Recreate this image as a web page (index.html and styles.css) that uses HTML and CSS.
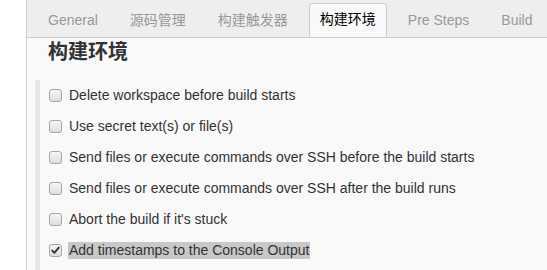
FILE: index.html
```html
<!DOCTYPE html>
<html>
<head>
<meta charset="utf-8">
<link rel="stylesheet" href="styles.css">
</head>
<body>
<div class="page">
  <div class="tabbar">
    <div class="tab">General</div>
    <div class="tab">源码管理</div>
    <div class="tab">构建触发器</div>
    <div class="tab active">构建环境</div>
    <div class="tab">Pre Steps</div>
    <div class="tab">Build</div>
  </div>
  <div class="content">
    <h2 class="title">构建环境</h2>
    <div class="section">
      <label class="row"><span class="cb"></span><span class="lbl">Delete workspace before build starts</span></label>
      <label class="row"><span class="cb"></span><span class="lbl">Use secret text(s) or file(s)</span></label>
      <label class="row"><span class="cb"></span><span class="lbl">Send files or execute commands over SSH before the build starts</span></label>
      <label class="row"><span class="cb"></span><span class="lbl">Send files or execute commands over SSH after the build runs</span></label>
      <label class="row"><span class="cb"></span><span class="lbl">Abort the build if it's stuck</span></label>
      <label class="row"><span class="cb checked"><svg viewBox="0 0 11 11" width="11" height="11"><path d="M2.2 5.6 L4.3 7.8 L8.8 2.6" fill="none" stroke="#333" stroke-width="1.9" stroke-linecap="round" stroke-linejoin="round"/></svg></span><span class="lbl sel">Add timestamps to the Console Output</span></label>
    </div>
  </div>
</div>
</body>
</html>
```
FILE: styles.css
```css
html, body {
  margin: 0;
  padding: 0;
  background: #ffffff;
  height: 100%;
  overflow: hidden;
}
.page {
  margin-left: 26px;
  border-left: 1px solid #d0d0d0;
  background: #f9f9f9;
  height: 100%;
  font-family: "Liberation Sans", Arial, "Noto Sans CJK SC", sans-serif;
}
.tabbar {
  display: flex;
  align-items: flex-end;
  gap: 10px;
  height: 37px;
  padding-left: 10px;
  background: #eeeeee;
  border-bottom: 1px solid #cccccc;
  white-space: nowrap;
  overflow: hidden;
}
.tab {
  font-size: 14px;
  color: #999999;
  padding: 0 10px;
  height: 34px;
  line-height: 31px;
  box-sizing: border-box;
  border: 1px solid transparent;
  border-bottom: none;
  margin-bottom: -1px;
}
.tab.active {
  color: #000000;
  background: #f9f9f9;
  border-color: #cccccc;
  border-radius: 4px 4px 0 0;
  height: 35px;
  line-height: 31px;
}
.content {
  padding-left: 21px;
}
.title {
  margin: 0;
  font-size: 20px;
  line-height: 25px;
  font-weight: bold;
  color: #333333;
  font-family: "Noto Sans CJK SC", sans-serif;
}
.section {
  margin-top: 17px;
  margin-left: -13px;
  border-left: 5px solid #e6e6e6;
  padding-left: 9px;
  height: 200px;
}
.row {
  display: flex;
  align-items: center;
  height: 31px;
  font-size: 14px;
  color: #333333;
  white-space: nowrap;
}
.cb {
  width: 11px;
  height: 11px;
  border: 1px solid #a6a6a6;
  border-radius: 3px;
  background: linear-gradient(#f6f6f6, #dedede);
  margin-right: 7px;
  display: flex;
  align-items: center;
  justify-content: center;
  flex: none;
}
.cb svg {
  display: block;
}
.lbl {
  line-height: 17px;
}
.lbl.sel {
  background: #c8c8c8;
  padding: 0 1px;
  margin-left: -1px;
}
```
